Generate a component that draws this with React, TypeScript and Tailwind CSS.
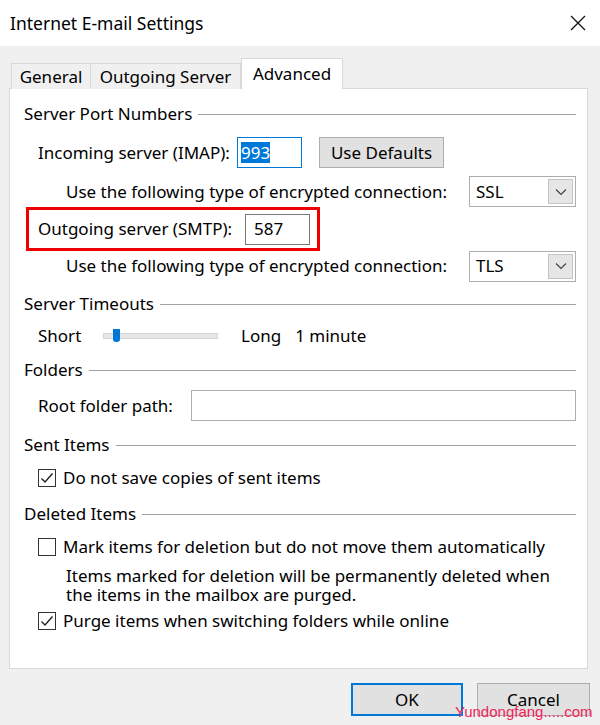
const font = { fontFamily: '"Noto Sans", "Open Sans", sans-serif' };

const SectionHeader = ({ title }: { title: string }) => (
  <div className="flex h-[24px] items-center">
    <span>{title}</span>
    <div className="ml-[6px] h-px flex-1 bg-[#a0a0a0]" />
  </div>
);

const Checkbox = ({ checked }: { checked: boolean }) => (
  <div className="flex h-[18px] w-[18px] shrink-0 items-center justify-center border-[1.5px] border-[#333] bg-white">
    {checked && (
      <svg width="14" height="14" viewBox="0 0 14 14">
        <polyline points="1.5,7.5 5,11 12.5,2.5" fill="none" stroke="#222" strokeWidth="1.4" />
      </svg>
    )}
  </div>
);

const Select = ({ value }: { value: string }) => (
  <div className="flex h-[31px] w-[107px] items-center border border-[#adadad] bg-white pl-[6px] pr-[2px]">
    <span className="flex-1">{value}</span>
    <div className="flex h-[25px] w-[25px] items-center justify-center border border-[#c4c4c4] bg-[#e6e6e6]">
      <svg width="12" height="8" viewBox="0 0 12 8">
        <polyline points="1,1.5 6,6.5 11,1.5" fill="none" stroke="#444" strokeWidth="1.2" />
      </svg>
    </div>
  </div>
);

export default function App() {
  return (
    <div className="relative h-[725px] w-[600px] overflow-hidden text-[17px] text-black" style={font}>
      {/* ==== Title bar ==== */}
      <div className="flex h-[46px] items-center justify-between bg-white pl-[10px] pr-[14px]">
        <span className="text-[17.5px]">Internet E-mail Settings</span>
        <svg width="16" height="16" viewBox="0 0 16 16">
          <path d="M1 1 L15 15 M15 1 L1 15" stroke="#111" strokeWidth="1.3" />
        </svg>
      </div>

      {/* ==== Body ==== */}
      <div className="flex h-[679px] flex-col bg-[#f0f0f0] px-[9px] pt-[12px]">
        {/* Tabs */}
        <div className="relative z-10 -mb-px flex h-[31px] items-end pl-[2px]">
          <div className="flex h-[26px] w-[80px] items-center justify-center border border-b-0 border-[#d9d9d9] bg-[#f0f0f0]">
            General
          </div>
          <div className="flex h-[26px] w-[150px] items-center justify-center border border-b-0 border-l-0 border-[#d9d9d9] bg-[#f0f0f0]">
            Outgoing Server
          </div>
          <div className="flex h-[31px] w-[102px] items-start justify-center border border-b-0 border-[#d9d9d9] bg-white pt-[2px]">
            Advanced
          </div>
        </div>

        {/* Panel */}
        <div className="flex h-[581px] w-[579px] flex-col border border-[#d9d9d9] bg-white pl-[14px] pr-[11px] pt-[13px]">
          <SectionHeader title="Server Port Numbers" />

          <div className="mt-[11px] flex h-[31px] items-center pl-[14px]">
            <span className="w-[199px]">Incoming server (IMAP):</span>
            <div className="flex h-[31px] w-[65px] items-center border border-[#0078d7] pl-[3px]">
              <span className="bg-[#0078d7] leading-[21px] text-white">993</span>
            </div>
            <div className="ml-[17px] flex h-[31px] w-[125px] items-center justify-center border border-[#adadad] bg-[#e1e1e1]">
              Use Defaults
            </div>
          </div>

          <div className="mt-[8px] flex h-[31px] items-center justify-between pl-[42px]">
            <span>Use the following type of encrypted connection:</span>
            <Select value="SSL" />
          </div>

          <div className="ml-[2px] flex h-[44px] w-[294px] items-center border-[3px] border-[#ee0000] pl-[9px]">
            <span className="w-[207px]">Outgoing server (SMTP):</span>
            <div className="flex h-[31px] w-[65px] items-center border border-[#7a7a7a] pl-[8px]">587</div>
          </div>

          <div className="flex h-[30px] items-center justify-between pl-[42px]">
            <span>Use the following type of encrypted connection:</span>
            <Select value="TLS" />
          </div>

          <div className="mt-[11px]">
            <SectionHeader title="Server Timeouts" />
          </div>
          <div className="mt-[8px] flex h-[24px] items-center pl-[14px]">
            <span className="w-[65px]">Short</span>
            <div className="relative h-[6px] w-[115px] border border-[#d6d6d6] bg-[#e7e7e7]">
              <div className="absolute left-[9px] top-[-5px] h-[13px] w-[7px] rounded-b-[3px] bg-[#0078d7]" />
            </div>
            <span className="ml-[23px]">Long</span>
            <span className="ml-[14px]">1 minute</span>
          </div>

          <div className="mt-[10px]">
            <SectionHeader title="Folders" />
          </div>
          <div className="mt-[8px] flex h-[31px] items-center pl-[14px]">
            <span className="w-[153px]">Root folder path:</span>
            <div className="h-[31px] flex-1 border border-[#adadad]" />
          </div>

          <div className="mt-[12px]">
            <SectionHeader title="Sent Items" />
          </div>
          <div className="mt-[9px] flex h-[24px] items-center gap-[7px] pl-[14px]">
            <Checkbox checked />
            <span>Do not save copies of sent items</span>
          </div>

          <div className="mt-[12px]">
            <SectionHeader title="Deleted Items" />
          </div>
          <div className="mt-[9px] flex h-[24px] items-center gap-[7px] pl-[14px]">
            <Checkbox checked={false} />
            <span>Mark items for deletion but do not move them automatically</span>
          </div>
          <p className="mt-[7px] pl-[42px] leading-[19px]">
            Items marked for deletion will be permanently deleted when
            <br />
            the items in the mailbox are purged.
          </p>
          <div className="mt-[5px] flex h-[24px] items-center gap-[7px] pl-[14px]">
            <Checkbox checked />
            <span>Purge items when switching folders while online</span>
          </div>
        </div>

        {/* Buttons */}
        <div className="mt-[14px] flex justify-end gap-[14px] pr-px">
          <div className="flex h-[33px] w-[112px] items-center justify-center border-2 border-[#0078d7] bg-[#e1e1e1]">
            OK
          </div>
          <div className="flex h-[33px] w-[113px] items-center justify-center border border-[#adadad] bg-[#e1e1e1]">
            Cancel
          </div>
        </div>
      </div>

      {/* watermark */}
      <span
        className="absolute left-[455px] top-[701px] text-[15px] text-[#f0245a]"
        style={{ fontFamily: '"Liberation Sans", sans-serif' }}
      >
        Yundongfang.....com
      </span>
    </div>
  );
}
